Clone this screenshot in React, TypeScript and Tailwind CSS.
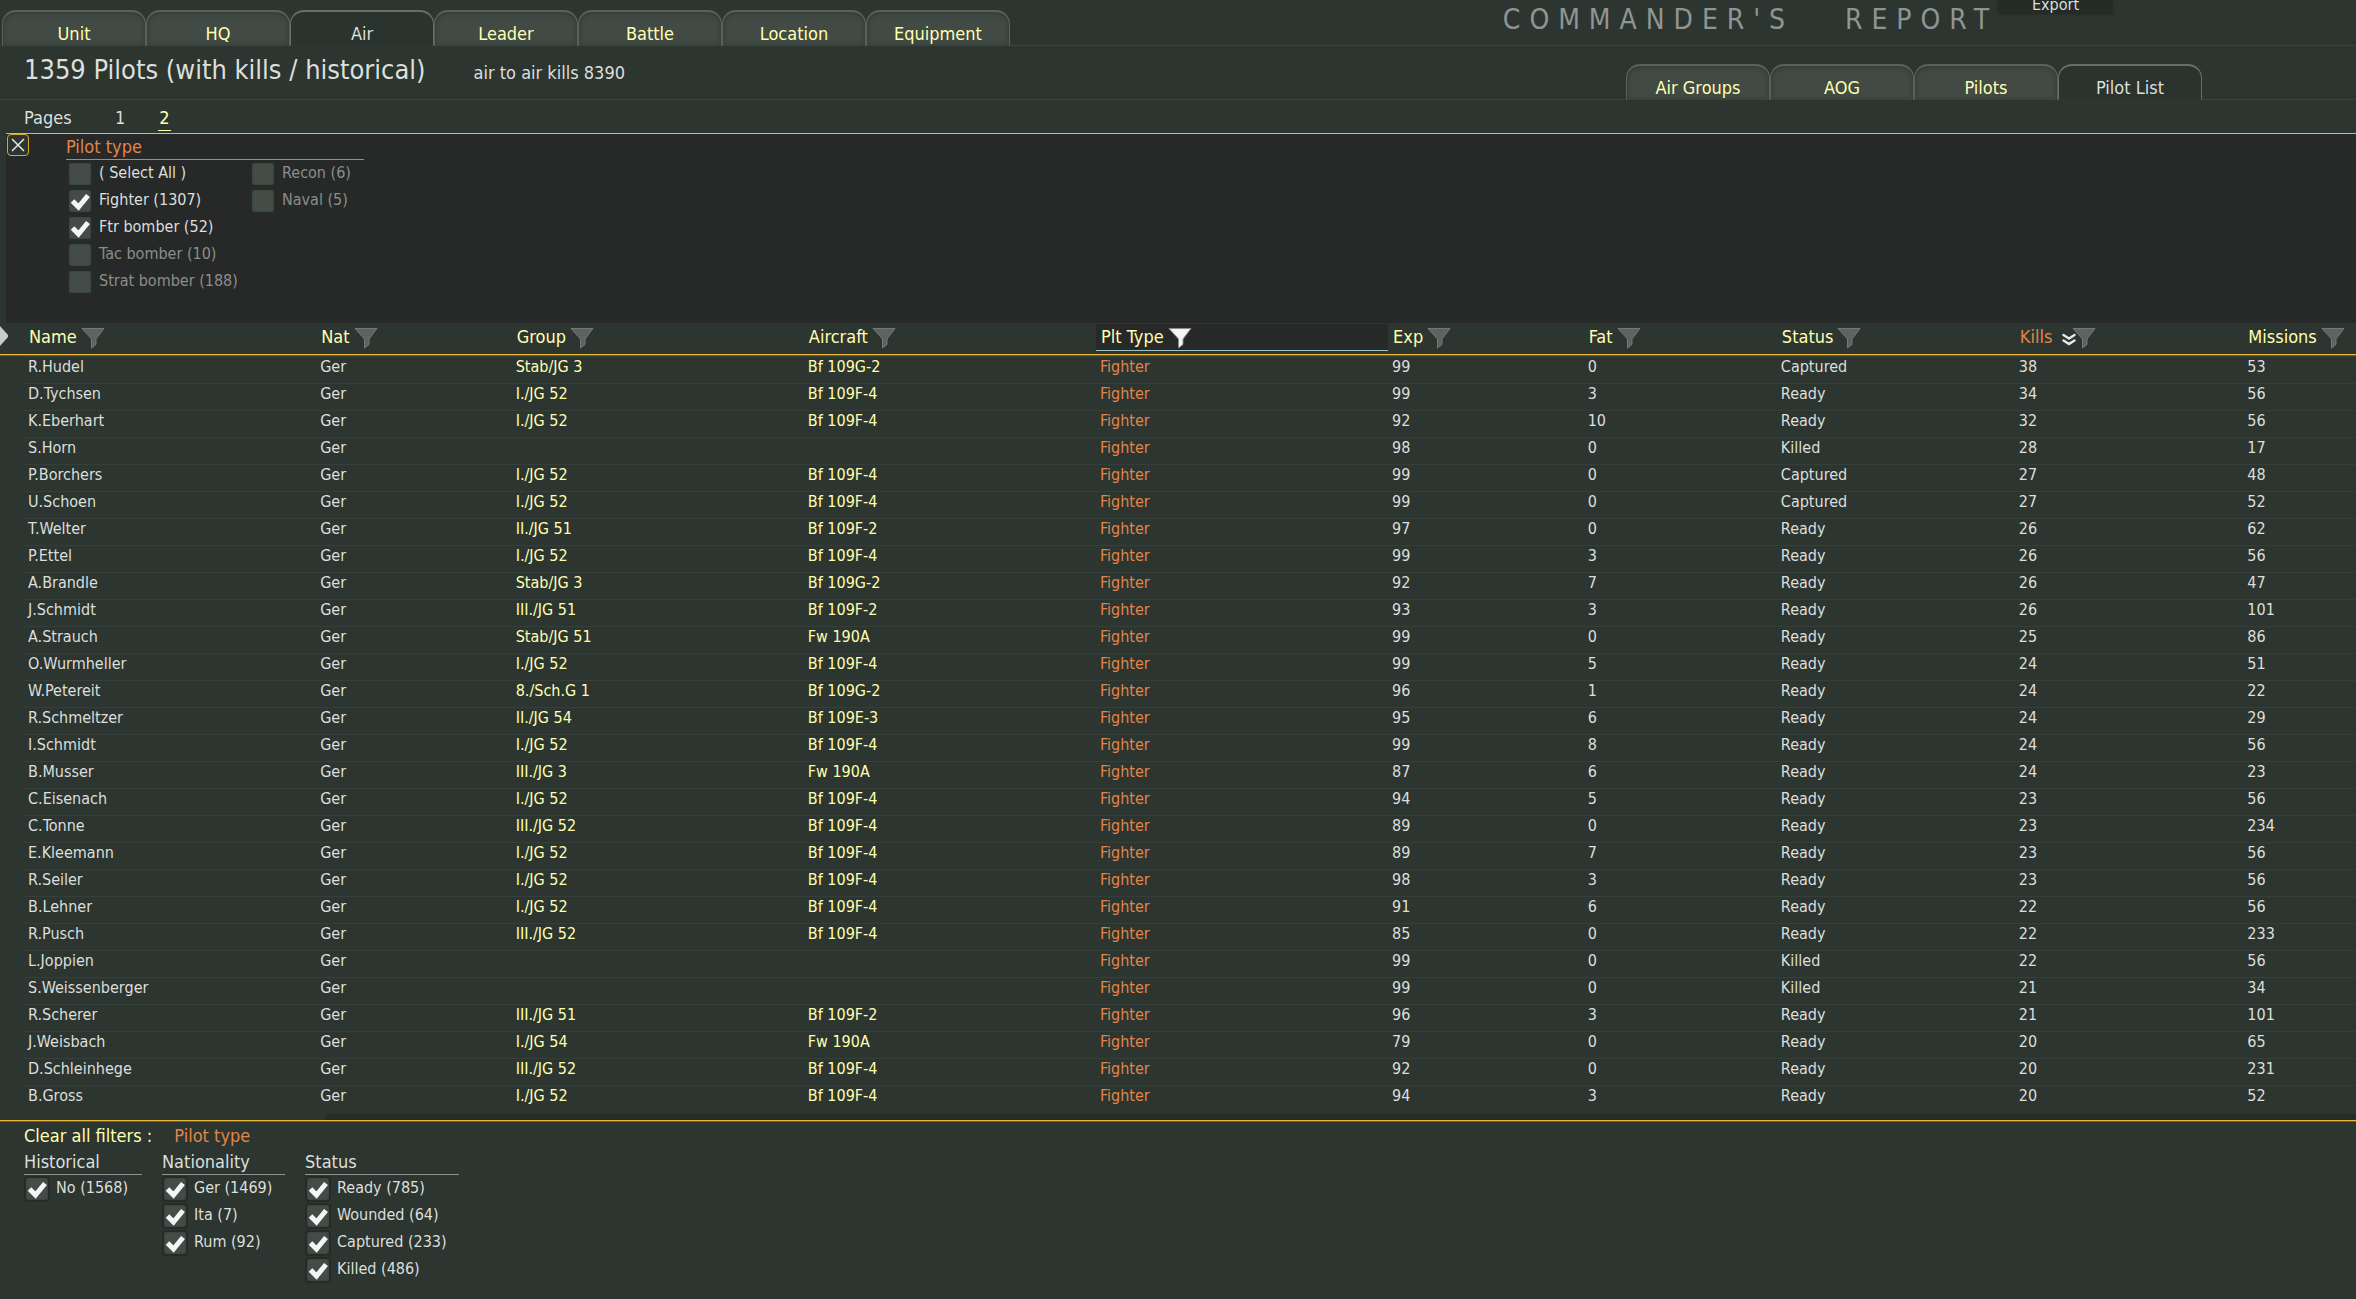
import { useState } from 'react';
import clsx from 'clsx';

type Option = { label: string; checked?: boolean; dim?: boolean };
type Column = { label: string; width: string; active?: boolean; sorted?: boolean };

const mainTabs = ['Unit', 'HQ', 'Air', 'Leader', 'Battle', 'Location', 'Equipment'];
const airTabs = ['Air Groups', 'AOG', 'Pilots', 'Pilot List'];

const pilotTypes: Option[] = [
  { label: '( Select All )' },
  { label: 'Fighter (1307)', checked: true },
  { label: 'Ftr bomber (52)', checked: true },
  { label: 'Tac bomber (10)', dim: true },
  { label: 'Strat bomber (188)', dim: true },
  { label: 'Recon (6)', dim: true },
  { label: 'Naval (5)', dim: true },
];

const historical: Option[] = [{ label: 'No (1568)', checked: true }];

const nationality: Option[] = [
  { label: 'Ger (1469)', checked: true },
  { label: 'Ita (7)', checked: true },
  { label: 'Rum (92)', checked: true },
];

const statuses: Option[] = [
  { label: 'Ready (785)', checked: true },
  { label: 'Wounded (64)', checked: true },
  { label: 'Captured (233)', checked: true },
  { label: 'Killed (486)', checked: true },
];

const columns: Column[] = [
  { label: 'Name', width: 'w-[12.4%]' },
  { label: 'Nat', width: 'w-[8.3%]' },
  { label: 'Group', width: 'w-[12.4%]' },
  { label: 'Aircraft', width: 'w-[12.4%]' },
  { label: 'Plt Type', width: 'w-[12.4%]', active: true },
  { label: 'Exp', width: 'w-[8.3%]' },
  { label: 'Fat', width: 'w-[8.2%]' },
  { label: 'Status', width: 'w-[10.1%]' },
  { label: 'Kills', width: 'w-[9.7%]', sorted: true },
  { label: 'Missions', width: 'w-auto' },
];

// name, group, aircraft, exp, fat, status, kills, missions
const pilots: [string, string, string, number, number, string, number, number][] = [
  ['R.Hudel', 'Stab/JG 3', 'Bf 109G-2', 99, 0, 'Captured', 38, 53],
  ['D.Tychsen', 'I./JG 52', 'Bf 109F-4', 99, 3, 'Ready', 34, 56],
  ['K.Eberhart', 'I./JG 52', 'Bf 109F-4', 92, 10, 'Ready', 32, 56],
  ['S.Horn', '', '', 98, 0, 'Killed', 28, 17],
  ['P.Borchers', 'I./JG 52', 'Bf 109F-4', 99, 0, 'Captured', 27, 48],
  ['U.Schoen', 'I./JG 52', 'Bf 109F-4', 99, 0, 'Captured', 27, 52],
  ['T.Welter', 'II./JG 51', 'Bf 109F-2', 97, 0, 'Ready', 26, 62],
  ['P.Ettel', 'I./JG 52', 'Bf 109F-4', 99, 3, 'Ready', 26, 56],
  ['A.Brandle', 'Stab/JG 3', 'Bf 109G-2', 92, 7, 'Ready', 26, 47],
  ['J.Schmidt', 'III./JG 51', 'Bf 109F-2', 93, 3, 'Ready', 26, 101],
  ['A.Strauch', 'Stab/JG 51', 'Fw 190A', 99, 0, 'Ready', 25, 86],
  ['O.Wurmheller', 'I./JG 52', 'Bf 109F-4', 99, 5, 'Ready', 24, 51],
  ['W.Petereit', '8./Sch.G 1', 'Bf 109G-2', 96, 1, 'Ready', 24, 22],
  ['R.Schmeltzer', 'II./JG 54', 'Bf 109E-3', 95, 6, 'Ready', 24, 29],
  ['I.Schmidt', 'I./JG 52', 'Bf 109F-4', 99, 8, 'Ready', 24, 56],
  ['B.Musser', 'III./JG 3', 'Fw 190A', 87, 6, 'Ready', 24, 23],
  ['C.Eisenach', 'I./JG 52', 'Bf 109F-4', 94, 5, 'Ready', 23, 56],
  ['C.Tonne', 'III./JG 52', 'Bf 109F-4', 89, 0, 'Ready', 23, 234],
  ['E.Kleemann', 'I./JG 52', 'Bf 109F-4', 89, 7, 'Ready', 23, 56],
  ['R.Seiler', 'I./JG 52', 'Bf 109F-4', 98, 3, 'Ready', 23, 56],
  ['B.Lehner', 'I./JG 52', 'Bf 109F-4', 91, 6, 'Ready', 22, 56],
  ['R.Pusch', 'III./JG 52', 'Bf 109F-4', 85, 0, 'Ready', 22, 233],
  ['L.Joppien', '', '', 99, 0, 'Killed', 22, 56],
  ['S.Weissenberger', '', '', 99, 0, 'Killed', 21, 34],
  ['R.Scherer', 'III./JG 51', 'Bf 109F-2', 96, 3, 'Ready', 21, 101],
  ['J.Weisbach', 'I./JG 54', 'Fw 190A', 79, 0, 'Ready', 20, 65],
  ['D.Schleinhege', 'III./JG 52', 'Bf 109F-4', 92, 0, 'Ready', 20, 231],
  ['B.Gross', 'I./JG 52', 'Bf 109F-4', 94, 3, 'Ready', 20, 52],
];

function Tabs({ items, initial }: { items: string[]; initial: string }) {
  const [current, setCurrent] = useState(initial);

  return (
    <nav className="flex items-end -mb-px">
      {items.map((item) => (
        <button
          key={item}
          onClick={() => setCurrent(item)}
          className={clsx(
            'flex h-9 w-36 items-end justify-center rounded-t-[14px] border-x border-t-2 border-b pb-px text-lg leading-5',
            item === current
              ? 'border-[#66706a] border-b-[#2c3530] bg-[#2b332e] text-[#dcdfdc]'
              : 'border-[#58615c] border-b-[#3a433e] bg-[#414a45] text-[#ffffb0] shadow-[inset_0_1px_5px_#2f3733]'
          )}
        >
          {item}
        </button>
      ))}
    </nav>
  );
}

function FunnelIcon({ active }: { active?: boolean }) {
  return (
    <svg viewBox="0 0 24 22" className="mt-0.5 h-[22px] w-6 shrink-0" aria-hidden="true">
      <path
        d="M1 1.5H23L15 12V17.5L10.5 21V12Z"
        fill={active ? '#f6f4f6' : '#5d6360'}
        stroke={active ? '#8a8c8b' : '#737876'}
        strokeWidth="1"
        strokeLinejoin="round"
      />
    </svg>
  );
}

function SortIcon() {
  return (
    <svg viewBox="0 0 14 14" className="ml-1.5 -mr-2 mt-1.5 h-3.5 w-3.5 shrink-0" aria-hidden="true">
      <path d="M1.5 2L7 5.5L12.5 2M1.5 7.5L7 11L12.5 7.5" fill="none" stroke="#e8e9e8" strokeWidth="2.4" strokeLinecap="round" />
    </svg>
  );
}

function CheckOption({ option }: { option: Option }) {
  return (
    <label className={clsx('flex h-[27px] items-center gap-1.5 text-base leading-[26px]', option.dim ? 'text-[#8b8e8c]' : 'text-[#dcdfdc]')}>
      <span className="grid h-[26px] w-[26px] shrink-0">
        <input
          type="checkbox"
          defaultChecked={option.checked}
          className="peer col-start-1 row-start-1 h-[26px] w-[26px] appearance-none rounded-sm border-2 border-[#262b28] bg-[#434c47] shadow-[inset_0_0_2px_#2f3632]"
        />
        <svg viewBox="0 0 26 26" className="pointer-events-none invisible col-start-1 row-start-1 h-[26px] w-[26px] peer-checked:visible" aria-hidden="true">
          <path d="M5.5 13L11.5 19L21 7.5" fill="none" stroke="#f4f5f4" strokeWidth="5" />
        </svg>
      </span>
      <span className="whitespace-nowrap pb-0.5">{option.label}</span>
    </label>
  );
}

function FilterGroup({ title, options, className }: { title: string; options: Option[]; className: string }) {
  return (
    <fieldset className={className}>
      <legend className="w-full border-b border-[#8e9390] text-lg leading-[25px]">{title}</legend>
      {options.map((option) => (
        <CheckOption key={option.label} option={option} />
      ))}
    </fieldset>
  );
}

export default function App() {
  const [page, setPage] = useState(2);
  const [showFilter, setShowFilter] = useState(true);

  return (
    <div className="min-h-screen bg-[#2c3530] font-['DejaVu_Sans_Condensed','DejaVu_Sans',sans-serif] text-[#dcdfdc]">
      {/* Top bar */}
      <header className="flex h-[46px] items-end justify-between border-b border-[#3a433e] pl-0.5 pr-[243px]">
        <Tabs items={mainTabs} initial="Air" />
        <div className="flex h-full items-start">
          <h1 className="whitespace-pre pt-1 text-[28px] leading-8 tracking-[0.32em] text-[#8f9592]">COMMANDER'S   REPORT</h1>
          <button className="h-3.5 w-[115px] bg-[#252b27] pb-1 text-base leading-[10px] shadow-[0_0_3px_#252b27]">Export</button>
        </div>
      </header>

      <div className="flex h-[54px] items-end justify-between border-b border-[#3a433e] pl-6 pr-[154px]">
        <div className="flex items-baseline gap-12 self-start pt-1.5">
          <h2 className="text-[27px] leading-9">1359 Pilots (with kills / historical)</h2>
          <span className="text-lg">air to air kills 8390</span>
        </div>
        <Tabs items={airTabs} initial="Pilot List" />
      </div>

      {/* Pages */}
      <div className="flex h-[33px] items-start pl-6 pt-1.5 text-lg leading-6">
        <span className="w-[90px]">Pages</span>
        {[1, 2].map((n) => (
          <button
            key={n}
            onClick={() => setPage(n)}
            className={clsx('mr-8 border-b px-px', n === page ? 'border-[#ffffb0] text-[#ffffb0]' : 'border-transparent')}
          >
            {n}
          </button>
        ))}
      </div>

      {/* Column filter */}
      {showFilter && (
        <section className="ml-1.5 flex h-[190px] items-start border-t border-[#9cc4c8] bg-[#272828] pl-px">
          <button
            onClick={() => setShowFilter(false)}
            aria-label="Close filter"
            className="flex h-[22px] w-[22px] items-center justify-center rounded border border-[#d8aa2c] bg-[#2d3531]"
          >
            <svg viewBox="0 0 14 14" className="h-3.5 w-3.5" aria-hidden="true">
              <path d="M1 1L13 13M13 1L1 13" stroke="#e4e6e4" strokeWidth="1.5" />
            </svg>
          </button>
          <fieldset className="ml-[37px] w-[298px] pt-px">
            <legend className="w-full border-b border-[#8e9390] text-lg leading-[25px] text-[#e0864a]">Pilot type</legend>
            <div className="-mt-px grid grid-flow-col grid-cols-[183px_1fr] grid-rows-5 pl-px">
              {pilotTypes.map((option) => (
                <CheckOption key={option.label} option={option} />
              ))}
            </div>
          </fieldset>
        </section>
      )}

      {/* Pilot table */}
      <table className="w-full table-fixed border-separate border-spacing-0 text-left">
        <thead>
          <tr>
            <td className="h-[33px] w-6 border-b border-[#7c5a12] p-0 align-top shadow-[inset_0_-1px_0_#eab93c]">
              <svg viewBox="0 0 8 22" className="mt-0.5 h-[22px] w-2" aria-hidden="true">
                <path d="M0 1L8 10V12L0 21Z" fill="#c9cbca" />
              </svg>
            </td>
            {columns.map((col) => (
              <th
                key={col.label}
                className={clsx('h-[33px] border-b border-[#7c5a12] p-0 align-top text-lg font-normal leading-6 shadow-[inset_0_-1px_0_#eab93c]', col.width)}
              >
                <button
                  className={clsx(
                    'mt-px flex h-[27px] w-full items-center gap-1 border-b pl-[5px]',
                    col.active ? 'border-[#9cc4c8] bg-[#272828]' : 'border-transparent',
                    col.sorted ? 'text-[#e0864a]' : 'text-[#ffffb0]'
                  )}
                >
                  {col.label}
                  {col.sorted && <SortIcon />}
                  <FunnelIcon active={col.active} />
                </button>
              </th>
            ))}
          </tr>
        </thead>
        <tbody className="text-base leading-5 [&_td]:h-[27px] [&_td]:border-t [&_td]:border-[#353e39] [&_td]:py-0 [&_td]:pr-0 [&_td]:pl-1 [&_td]:align-top [&_td:first-child]:border-transparent">
          {pilots.map(([name, group, aircraft, exp, fat, status, kills, missions]) => (
            <tr key={name}>
              <td></td>
              <td>{name}</td>
              <td>Ger</td>
              <td className="text-[#ffffb0]">{group}</td>
              <td className="text-[#ffffb0]">{aircraft}</td>
              <td className="text-[#e0864a]">Fighter</td>
              <td>{exp}</td>
              <td>{fat}</td>
              <td>{status}</td>
              <td>{kills}</td>
              <td>{missions}</td>
            </tr>
          ))}
        </tbody>
      </table>
      <div className="h-[9px] border-b border-[#eab93c] pt-0.5 pl-[326px]">
        <div className="h-1.5 bg-[#272c29]"></div>
      </div>

      {/* Filters */}
      <footer className="border-t border-[#7c5a12] pl-6">
        <div className="flex gap-[22px] text-lg leading-[27px]">
          <button className="text-[#ffffb0]">Clear all filters :</button>
          <button className="text-[#e0864a]">Pilot type</button>
        </div>
        <div className="flex items-start">
          <FilterGroup title="Historical" options={historical} className="mr-5 w-[118px]" />
          <FilterGroup title="Nationality" options={nationality} className="mr-5 w-[123px]" />
          <FilterGroup title="Status" options={statuses} className="w-[154px]" />
        </div>
      </footer>
    </div>
  );
}
